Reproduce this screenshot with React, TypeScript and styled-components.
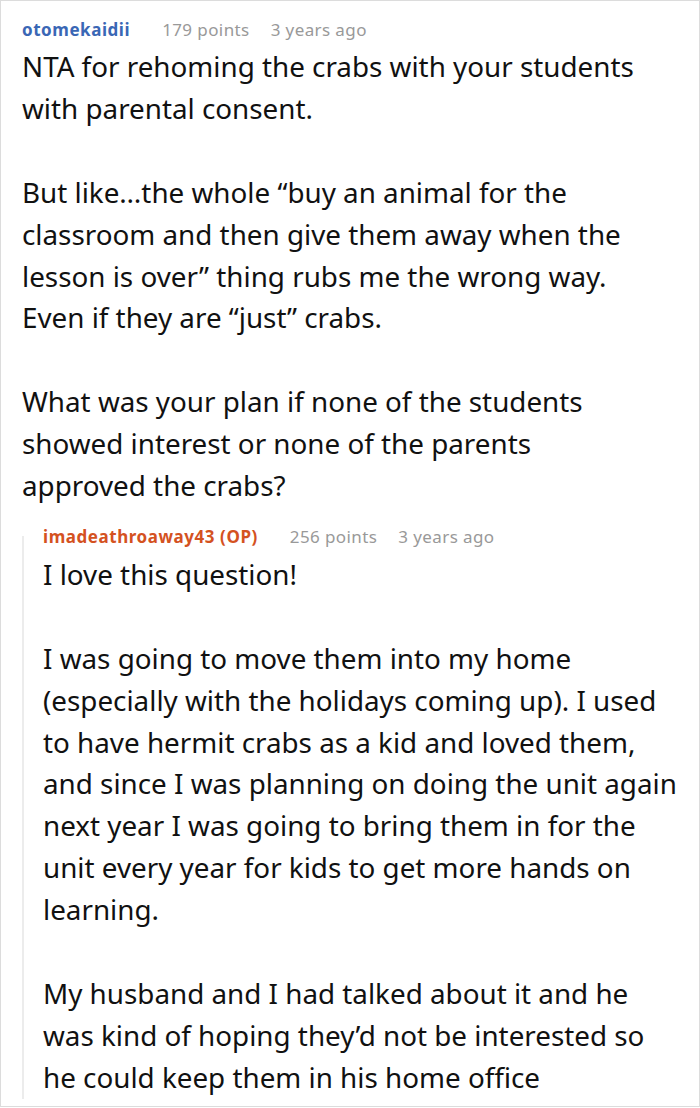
import styled, { createGlobalStyle } from 'styled-components'

const GlobalStyle = createGlobalStyle`
  body {
    margin: 0;
    background: #fff;
    font-family: 'Noto Sans', sans-serif;
  }
`

const Frame = styled.div`
  box-sizing: border-box;
  width: 700px;
  height: 1107px;
  border: 1px solid #dcdcdc;
  overflow: hidden;
  padding: 16px 20px 0 21px;
  background: #fff;
`

const Header = styled.div`
  display: flex;
  align-items: baseline;
  gap: 21px;
  font-size: 17px;
  line-height: 26px;
  letter-spacing: 0.4px;
  color: #999;
`

const Author = styled.span<{ $op?: boolean }>`
  font-weight: bold;
  letter-spacing: 0.55px;
  color: ${({ $op }) => ($op ? '#d4521f' : '#3a67b5')};
  margin-right: 11px;
`

const Body = styled.div<{ $maxWidth?: number }>`
  margin-top: 3px;
  max-width: ${({ $maxWidth }) => ($maxWidth ? `${$maxWidth}px` : 'none')};
  font-size: 27.8px;
  line-height: 41.9px;
  color: #111;

  p {
    margin: 0 0 41.9px 0;
  }

  p:last-child {
    margin-bottom: 0;
  }
`

const Reply = styled.div`
  position: relative;
  margin-top: 17px;
  padding-left: 21px;

  &::before {
    content: '';
    position: absolute;
    left: 0;
    top: 12px;
    bottom: 0;
    width: 2px;
    background: #ececec;
  }

  ${Body} {
    margin-top: 4px;
  }
`

type CommentProps = {
  author: string
  op?: boolean
  points: number
  age: string
}

const CommentHeader = ({ author, op, points, age }: CommentProps) => (
  <Header>
    <Author $op={op}>{op ? `${author} (OP)` : author}</Author>
    <span>{points} points</span>
    <span>{age}</span>
  </Header>
)

const Text = ({ paragraphs, maxWidth }: { paragraphs: string[]; maxWidth?: number }) => (
  <Body $maxWidth={maxWidth}>
    {paragraphs.map((p, i) => (
      <p key={i}>{p}</p>
    ))}
  </Body>
)

export default function App() {
  return (
    <>
      <GlobalStyle />
      <Frame>
        <CommentHeader author="otomekaidii" points={179} age="3 years ago" />
        <Text
          maxWidth={628}
          paragraphs={[
            'NTA for rehoming the crabs with your students with parental consent.',
            'But like\u2026the whole \u201cbuy an animal for the classroom and then give them away when the lesson is over\u201d thing rubs me the wrong way. Even if they are \u201cjust\u201d crabs.',
            'What was your plan if none of the students showed interest or none of the parents approved the crabs?',
          ]}
        />
        <Reply>
          <CommentHeader author="imadeathroaway43" op points={256} age="3 years ago" />
          <Text
            paragraphs={[
              'I love this question!',
              'I was going to move them into my home (especially with the holidays coming up). I used to have hermit crabs as a kid and loved them, and since I was planning on doing the unit again next year I was going to bring them in for the unit every year for kids to get more hands on learning.',
              'My husband and I had talked about it and he was kind of hoping they\u2019d not be interested so he could keep them in his home office',
            ]}
          />
        </Reply>
      </Frame>
    </>
  )
}
